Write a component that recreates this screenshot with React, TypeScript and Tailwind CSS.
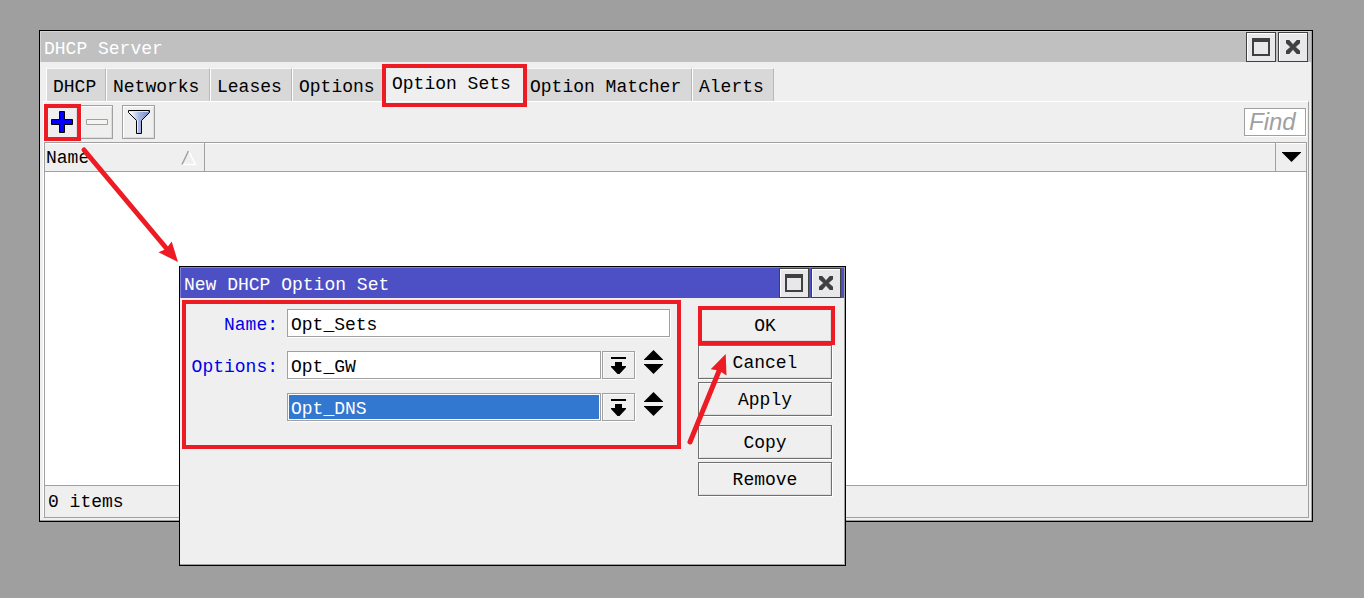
import { useState } from "react";
import type { ReactNode } from "react";

const tabs = [
  { label: "DHCP", width: "min-w-[60px]" },
  { label: "Networks", width: "min-w-[104px]" },
  { label: "Leases", width: "min-w-[82px]" },
  { label: "Options", width: "min-w-[92px]" },
  { label: "Option Sets", width: "min-w-[139px]" },
  { label: "Option Matcher", width: "min-w-[169px]" },
  { label: "Alerts", width: "min-w-[82px]" },
];

function MaximizeIcon() {
  return (
    <svg width="18" height="18" viewBox="0 0 18 18" aria-hidden="true">
      <path d="M0 0H18V18H0ZM2 4V16H16V4Z" fill="#404040" fillRule="evenodd" />
    </svg>
  );
}

function CloseIcon() {
  return (
    <svg width="14" height="14" viewBox="0 0 14 14" aria-hidden="true">
      <path
        d="M0 0H3L7 4.500L11 0H14V3L9.500 7L14 11V14H11L7 9.500L3 14H0V11L4.500 7L0 3Z"
        fill="#404040"
        stroke="#404040"
        strokeWidth=".5"
      />
    </svg>
  );
}

function PlusIcon() {
  return (
    <svg width="22" height="22" viewBox="0 0 22 22" aria-hidden="true">
      <path d="M8.5.5H13.5V8.5H21.5V13.5H13.5V21.5H8.5V13.5H.5V8.5H8.5Z" fill="#0000ff" stroke="#000" />
    </svg>
  );
}

function MinusIcon() {
  return (
    <svg width="22" height="6" viewBox="0 0 22 6" aria-hidden="true">
      <path d="M.5.5H21.5V5.5H.5Z" fill="#f4f4f0" stroke="#a0a0a0" />
    </svg>
  );
}

function FunnelIcon() {
  return (
    <svg width="22" height="24" viewBox="0 0 22 24" aria-hidden="true">
      <defs>
        <linearGradient id="funnel" x1="0" x2="1">
          <stop offset="0.1" stopColor="#ffffff" />
          <stop offset="0.5" stopColor="#a8b8e4" />
          <stop offset="0.9" stopColor="#8090c8" />
        </linearGradient>
      </defs>
      <path d="M.5.5H21.5V2.5L13.5 10.5V23.5H8.5V10.5L.5 2.5Z" fill="url(#funnel)" stroke="#000" />
      <path d="M2 1.5H20" stroke="#dfe5f6" />
      <path d="M9.5 10V22.5" stroke="#f0f3fc" />
    </svg>
  );
}

function DropIcon() {
  return (
    <svg width="15" height="17" viewBox="0 0 15 17" aria-hidden="true">
      <path d="M0 0H15V2H0ZM4 5H11V9H15V10L8.500 17H6.500L0 10V9H4Z" />
    </svg>
  );
}

function TitleBar({ title, active }: { title: string; active?: boolean }) {
  const button =
    "flex size-[30px] items-center justify-center border border-[#404040] bg-[#e8e8ea] shadow-[inset_1px_1px_0_#fff]";
  return (
    <header
      className={
        active
          ? "flex h-[31px] shrink-0 items-end justify-between border-l border-t border-[#7f82d8] bg-[#4d50c4] pl-[3px] pr-[3px] text-white"
          : "flex h-[31px] shrink-0 items-end justify-between border-l border-t border-[#d4d4d4] bg-[#c0c0c0] pl-[3px] pr-[3px] text-white"
      }
    >
      <h2 className="leading-[26px]">{title}</h2>
      <div className="flex gap-[2px]">
        <button type="button" aria-label="Maximize" className={button}>
          <MaximizeIcon />
        </button>
        <button type="button" aria-label="Close" className={button}>
          <CloseIcon />
        </button>
      </div>
    </header>
  );
}

function ToolButton({ label, children }: { label: string; children: ReactNode }) {
  return (
    <button
      type="button"
      aria-label={label}
      className="flex h-[34px] w-[33px] items-center justify-center border border-[#a0a0a0] bg-[#efefef] shadow-[inset_1px_1px_0_#fff,inset_-1px_-1px_0_#dcdcdc]"
    >
      {children}
    </button>
  );
}

function ActionButton({ label }: { label: string }) {
  return (
    <button
      type="button"
      className="h-[34px] border border-[#707070] bg-[#efefef] pt-[2px] shadow-[1px_1px_0_#fff,inset_1px_1px_0_#fafafa,inset_-1px_-1px_0_#dcdcdc]"
    >
      {label}
    </button>
  );
}

function OptionRow({ initial, selected, id }: { initial: string; selected?: boolean; id: string }) {
  const [value, setValue] = useState(initial);
  return (
    <div className="flex items-start">
      <div className="flex h-7 flex-1 border border-[#a0a0a0] bg-white p-px shadow-[1px_1px_0_#fff]">
        <input
          id={id}
          aria-label={selected ? "Options, second entry" : undefined}
          value={value}
          onChange={(e) => setValue(e.target.value)}
          className={
            selected
              ? "w-full min-w-0 bg-[#3277d0] px-[2px] pt-1 text-white outline-none"
              : "w-full min-w-0 bg-white px-[2px] pt-1 outline-none"
          }
        />
      </div>
      <button
        type="button"
        aria-label="Choose option"
        className="ml-px flex h-7 w-[33px] items-center justify-center border border-[#a0a0a0] shadow-[1px_1px_0_#fff,inset_1px_1px_0_#fafafa]"
      >
        <DropIcon />
      </button>
      <div className="-mt-px ml-[9px] mr-[7px] flex flex-col gap-1">
        <button type="button" aria-label="Add entry">
          <svg width="19" height="10" viewBox="0 0 19 10" aria-hidden="true" className="block">
            <path d="M0 9.500L9.500 0L19 9.500V10H0Z" />
          </svg>
        </button>
        <button type="button" aria-label="Remove entry">
          <svg width="19" height="10" viewBox="0 0 19 10" aria-hidden="true" className="block">
            <path d="M0 0H19V.5L9.500 10L0 .5Z" />
          </svg>
        </button>
      </div>
    </div>
  );
}

function OptionSetDialog() {
  const [name, setName] = useState("Opt_Sets");
  return (
    <section
      role="dialog"
      aria-label="New DHCP Option Set"
      className="absolute left-[179px] top-[266px] flex h-[300px] w-[667px] flex-col border border-black bg-[#efefef] shadow-[inset_-1px_-1px_0_#a0a0a0]"
    >
      <div className="mr-px">
        <TitleBar title="New DHCP Option Set" active />
      </div>
      <form className="flex items-start justify-between pr-[13px] pt-[10px]" onSubmit={(e) => e.preventDefault()}>
        <div className="grid w-[490px] grid-cols-[98px_1fr] gap-x-[9px] gap-y-[14px] pt-px">
          <label htmlFor="set-name" className="h-7 text-right leading-8 text-[#0000e8]">
            Name:
          </label>
          <input
            id="set-name"
            value={name}
            onChange={(e) => setName(e.target.value)}
            className="h-7 w-full border border-[#a0a0a0] bg-white px-[3px] pt-1 shadow-[1px_1px_0_#fff] outline-none"
          />
          <label htmlFor="set-option" className="h-7 text-right leading-8 text-[#0000e8]">
            Options:
          </label>
          <div className="flex flex-col gap-[14px]">
            <OptionRow id="set-option" initial="Opt_GW" />
            <OptionRow id="set-option-2" initial="Opt_DNS" selected />
          </div>
        </div>
        <div className="flex w-[134px] flex-col gap-[9px]">
          <div className="flex flex-col gap-[3px]">
            <ActionButton label="OK" />
            <ActionButton label="Cancel" />
            <ActionButton label="Apply" />
          </div>
          <div className="flex flex-col gap-[3px]">
            <ActionButton label="Copy" />
            <ActionButton label="Remove" />
          </div>
        </div>
      </form>
    </section>
  );
}

function Annotations() {
  return (
    <svg
      width="850"
      height="560"
      viewBox="0 0 850 560"
      aria-hidden="true"
      className="pointer-events-none absolute left-0 top-0"
    >
      <g fill="none" stroke="#ed1c24" strokeWidth="4">
        <rect x="384" y="66" width="141" height="39" />
        <rect x="46" y="106" width="33" height="33" />
        <rect x="184" y="302" width="495" height="145" />
        <rect x="700" y="308" width="133" height="35" />
      </g>
      <g stroke="#ed1c24" strokeWidth="5" strokeLinecap="round">
        <path d="M84 150L167 249" />
        <path d="M690 442L719 371" />
      </g>
      <g fill="#ed1c24">
        <path d="M178 262L158.500 252.300L166 249L171.700 241.500Z" />
        <path d="M725.700 354L710.700 369.300L719 370.500L726.500 375.500Z" />
      </g>
    </svg>
  );
}

export default function App() {
  const [current, setCurrent] = useState("Option Sets");
  return (
    <div className="relative flex min-h-screen flex-col overflow-hidden bg-[#9f9f9f] pb-[76px] pl-[39px] pr-[51px] pt-[30px] font-['Liberation_Mono','Noto_Sans_CJK_SC',monospace] text-[18px] leading-[22px] text-black">
      <main className="flex flex-1 flex-col border border-black bg-[#efefef] shadow-[inset_-1px_-1px_0_#a0a0a0]">
        <div className="mr-px">
          <TitleBar title="DHCP Server" />
        </div>

        <nav role="tablist" aria-label="DHCP sections" className="flex h-[39px] items-end pl-[6px]">
          {tabs.map((tab) => (
            <button
              key={tab.label}
              type="button"
              role="tab"
              aria-selected={tab.label === current}
              onClick={() => setCurrent(tab.label)}
              className={
                tab.label === current
                  ? `${tab.width} h-[35px] whitespace-nowrap bg-[#efefef] pl-2 pt-px text-left`
                  : `${tab.width} h-[33px] whitespace-nowrap border-l border-r border-t border-l-white border-r-[#b8b8b8] border-t-[#f8f8f8] bg-[#d8d8d8] pl-[6px] pt-1 text-left`
              }
            >
              {tab.label}
            </button>
          ))}
        </nav>

        <div className="mb-[3px] ml-[3px] mr-[3px] flex flex-1 flex-col border border-b-[#a0a0a0] border-l-white border-r-[#a0a0a0] border-t-white">
          <div className="flex h-10 items-center justify-between pl-px pr-[2px]">
            <div className="flex">
              <ToolButton label="Add">
                <PlusIcon />
              </ToolButton>
              <div className="ml-[2px] mr-[9px]">
                <ToolButton label="Remove selected">
                  <MinusIcon />
                </ToolButton>
              </div>
              <ToolButton label="Filter">
                <FunnelIcon />
              </ToolButton>
            </div>
            <input
              aria-label="Find"
              placeholder="Find"
              className="h-7 w-[62px] border border-[#a0a0a0] bg-white px-1 font-['Liberation_Sans',sans-serif] text-[24px] italic shadow-[1px_1px_0_#fff] outline-none placeholder:text-[#a0a0a0]"
            />
          </div>

          <div className="mr-px flex-1 border border-[#a0a0a0] bg-white">
            <table className="w-full border-separate border-spacing-0">
              <thead>
                <tr className="h-[29px] bg-[#efefef] shadow-[inset_0_1px_0_#fff]">
                  <th scope="col" className="w-[160px] border-b border-r border-[#a0a0a0] p-0 text-left font-normal">
                    <div className="flex items-center justify-between pl-px pr-[7px] pt-[2px]">
                      Name
                      <svg width="16" height="16" viewBox="0 0 16 16" aria-hidden="true">
                        <path d="M7.500 1L14.500 14.500H1" fill="none" stroke="#fff" strokeWidth="1.500" />
                        <path d="M1 14.500L7.500 1" fill="none" stroke="#a0a0a0" strokeWidth="1.500" />
                      </svg>
                    </div>
                  </th>
                  <td className="border-b border-[#a0a0a0] p-0" />
                  <td className="w-[31px] border-b border-l border-[#a0a0a0] p-0">
                    <button type="button" aria-label="Choose columns" className="flex w-full items-center justify-center">
                      <svg width="19" height="10" viewBox="0 0 19 10" aria-hidden="true">
                        <path d="M0 0H19V.5L9.500 10L0 .5Z" />
                      </svg>
                    </button>
                  </td>
                </tr>
              </thead>
            </table>
          </div>

          <footer className="mr-[2px] h-[31px] border-l border-[#a0a0a0] pl-[3px] pt-[5px]">0 items</footer>
        </div>
      </main>

      <OptionSetDialog />
      <Annotations />
    </div>
  );
}
